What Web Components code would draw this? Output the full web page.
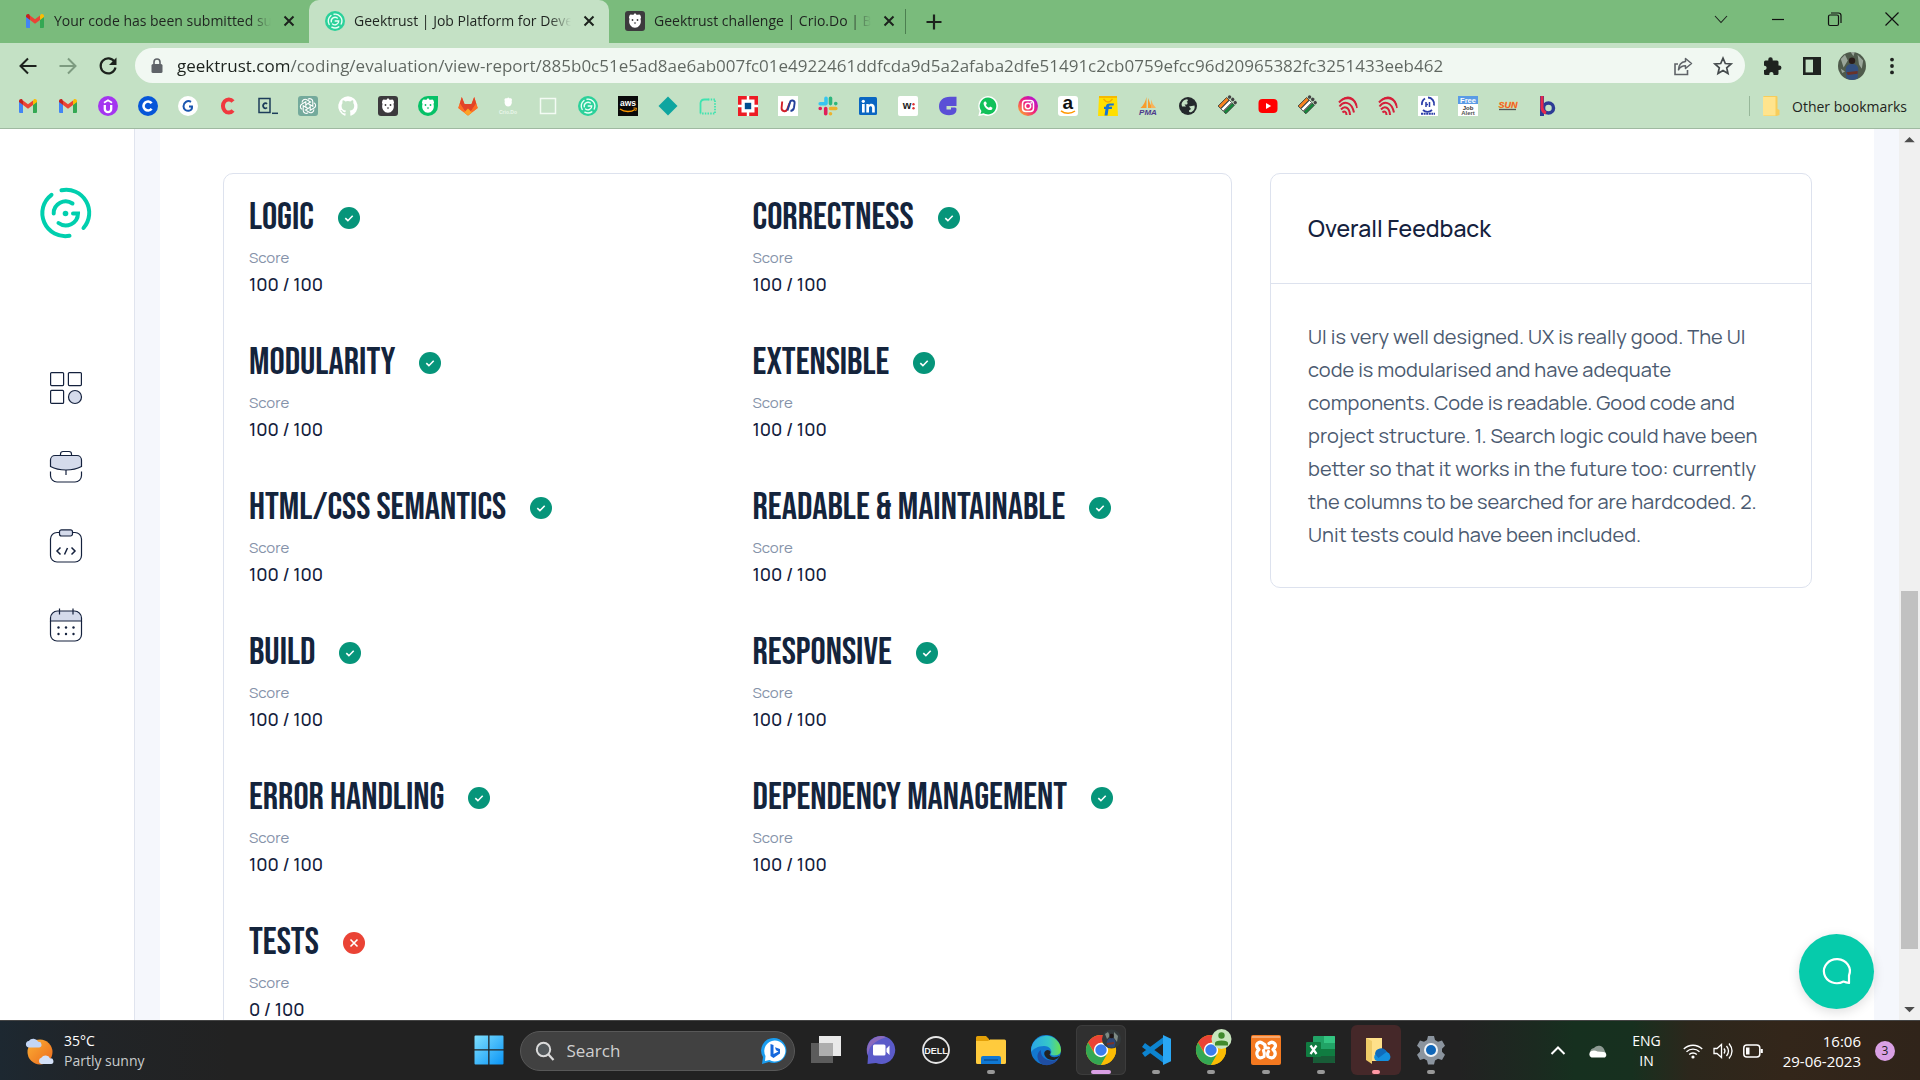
<!DOCTYPE html>
<html lang="en">
<head>
<meta charset="utf-8">
<title>Geektrust | Job Platform for Developers</title>
<style>
html,body{margin:0;height:100%}
body{font-family:"Open Sans","Noto Sans",sans-serif;color:#1f2420;overflow:hidden}
</style>
</head>
<body>
<desktop-screen></desktop-screen>
<script>
const star5 = 'M10 2.2l2.3 5.3 5.8.5-4.4 3.8 1.3 5.7-5-3-5 3 1.3-5.7L1.9 8l5.8-.5z';
const bear = '<path fill="#fff" d="M4.5 4.500Q5.300 2.800 7 3.800L8.500 3.800 10 2 11.500 3.800 13 3.800Q14.700 2.800 15.500 4.500Q16.600 6.500 15.500 8C17 13 13.500 16.800 10 16.800S3 13 4.500 8Q3.400 6.500 4.500 4.500z"/>';
const bearFace = '<circle cx="7.5" cy="9" r=".9"/><circle cx="12.500" cy="9" r=".9"/><path d="M8.800 11.500h2.400L10 13.200z"/>';
const gmail = '<path fill="#4285f4" d="M1 5.500V16a1 1 0 0 0 1 1h3V8.500z"/><path fill="#34a853" d="M15 8.500V17h3a1 1 0 0 0 1-1V5.500z"/><path fill="#fbbc04" d="M15 4.800V9l4-3V5c0-1.800-2-2.600-3.300-1.600z"/><path fill="#c5221f" d="M1 5v1l4 3V4.800L4.300 3.400C3 2.400 1 3.200 1 5z"/><path fill="#ea4335" d="M5 9V4.400l5 3.800 5-3.800V9l-5 3.800z"/>';
const geek = '<circle cx="10" cy="10" r="10" fill="#2bd19a"/><g fill="none" stroke="#eafff6" stroke-width="1.400" stroke-linecap="round"><path d="M4.200 13.500A6.800 6.800 0 0 1 6 4.500M9 3.200a6.900 6.900 0 0 1 7.200 9.800M13.800 15.800a7 7 0 0 1-7 .4M6.300 10.800a3.800 3.800 0 0 1 6-3.800M10.200 10h3.500a3.800 3.800 0 0 1-6.200 3"/></g>';
const crio = (bg, r) => `<rect width="20" height="20" rx="${r}" fill="${bg}"/>${bear}<g fill="${bg}">${bearFace}</g>`;
const voter = '<g transform="rotate(45 10 10)"><rect x="3" y="5" width="3.500" height="12" fill="#f58220" stroke="#333" stroke-width=".8"/><rect x="7" y="5" width="3.200" height="12" fill="#fff" stroke="#333" stroke-width=".8"/><rect x="11" y="5" width="3" height="12" fill="#138a3a" stroke="#333" stroke-width=".8"/><g fill="#444"><circle cx="4.700" cy="2.500" r="1.700"/><circle cx="8.700" cy="2" r="1.700"/><circle cx="12.700" cy="2.500" r="1.700"/></g></g>';
const arcs = '<g fill="none" stroke="#d5203a" stroke-width="2"><path d="M1 6.500C7-.5 16 1.500 18.500 9.500M1.500 10.500c4.500-6 12-5 14.500 6M3 13.500c3.500-4 8.500-2.500 9 5.500M4.500 16.500c2-2 4-.6 4 2.500"/><path d="M3.500 3.800C9-.5 17-.2 19 12" stroke-width="1.600"/></g>';
const chrome = '<circle cx="15" cy="15" r="15" fill="#fbbc04"/><path fill="#ea4335" d="M2 7.500A15 15 0 0 1 28 7.500H15L9 18.500z"/><path fill="#34a853" d="M2 7.500A15 15 0 0 0 15 30l6.500-11.200-6.500 3-6.500-3.300z"/><path fill="#fbbc04" d="M28 7.500H15l6.500 11.300L15 30A15 15 0 0 0 28 7.500z"/><circle cx="15" cy="15" r="7.200" fill="#fff"/><circle cx="15" cy="15" r="5.700" fill="#3b7ded"/>';
const T = (x,y,s,f,t,extra='') => `<text x="${x}" y="${y}" font-size="${s}" fill="${f}" text-anchor="middle" font-family="Liberation Sans,sans-serif" font-weight="700" ${extra}>${t}</text>`;

const ICONS = {
  gmail, geek,
  crio: crio('#3c3a3d',3),
  udemy: '<circle cx="10" cy="10" r="10" fill="#a435f0"/><path d="M6.800 9v4a3.200 3.200 0 0 0 6.400 0V9" fill="none" stroke="#fff" stroke-width="2.300"/><path d="M6 6.800l4-2.500 4 2.500" fill="none" stroke="#fff" stroke-width="1.800"/>',
  coin: '<circle cx="10" cy="10" r="10" fill="#0656d8"/><path d="M13.600 7.300a4.500 4.500 0 1 0 0 5.400" fill="none" stroke="#fff" stroke-width="2.600"/>',
  gwhite: '<circle cx="10" cy="10" r="10" fill="#fff"/><path d="M13 5.800C9.500 3.600 5.500 6.500 5.500 10.200c0 3.200 3 5.300 6 4.400 2-.6 2.700-2.300 2.500-4.200h-3" fill="none" stroke="#1a56b0" stroke-width="2"/>',
  cred: '<path d="M15 5.500a5.800 6.600 0 1 0 0 9" fill="none" stroke="#f0383e" stroke-width="4"/>',
  codec: '<rect x="1" y="2.500" width="11" height="14" fill="none" stroke="#1c3d5a" stroke-width="1.500"/><path d="M9 8a2.200 2.600 0 1 0 0 3.500" fill="none" stroke="#1c3d5a" stroke-width="1.700"/><path d="M14 17.300h6" stroke="#1c3d5a" stroke-width="1.500"/>',
  openai: '<rect width="20" height="20" rx="3" fill="#74aa9c"/><g fill="none" stroke="#fff" stroke-width="1.100">' + [0,60,120,180,240,300].map(a => `<path d="M10 3.300a3 3 0 0 1 4.800 2.500v4.400L10 7.500" transform="rotate(${a} 10 10)"/>`).join('') + '</g>',
  github: '<path fill="#fff" d="M10 .3a10 10 0 0 0-3.200 19.400c.5.100.7-.2.700-.5v-1.900c-2.800.6-3.400-1.200-3.400-1.200-.4-1.100-1.100-1.400-1.100-1.400-.9-.6.100-.6.100-.6 1 .1 1.500 1 1.500 1 .9 1.500 2.400 1.100 2.900.8.100-.6.400-1.100.7-1.300-2.300-.3-4.600-1.100-4.600-4.900 0-1.100.4-2 1-2.700-.1-.2-.4-1.200.1-2.600 0 0 .8-.3 2.700 1a9.400 9.400 0 0 1 5 0c1.900-1.300 2.700-1 2.700-1 .5 1.400.2 2.400.1 2.600.6.700 1 1.600 1 2.700 0 3.800-2.300 4.600-4.600 4.900.4.300.7.900.7 1.900v2.700c0 .3.200.6.700.5A10 10 0 0 0 10 .3z"/>',
  criogreen: '<path d="M10 0h10v10a10 10 0 1 1-10-10z" fill="#06c167"/>'+bear+'<g fill="#06c167">'+bearFace+'</g>',
  gitlab: '<path fill="#fc6d26" d="M10 19.500L.3 12 3.800 1l2.700 7h7l2.700-7 3.500 11z"/><path fill="#e24329" d="M3.800 1l2.700 7h7l2.700-7 2 6.500L10 19.500 1.800 7.500z" /><path fill="#fc6d26" d="M1.800 7.500L10 19.500.3 12zM18.200 7.500L10 19.500l9.700-7.500z"/><path fill="#fca326" d="M6 16.400l4 3.100 4-3.100-4-4z"/>',
  criodo: '<g transform="translate(4 0) scale(.62)">'+bear+'</g>'+T(10,18,5,'#e9f6ea','Crio.Do'),
  box: '<rect x="2.500" y="2.500" width="15" height="15" fill="none" stroke="#f3fbf4" stroke-width="1.500"/>',
  aws: '<rect width="20" height="20" fill="#0a0a0a"/>'+T(10,10,8.5,'#fff','aws')+'<path d="M2 13c4.500 3.300 11 3.300 15 .5" fill="none" stroke="#f90" stroke-width="1.500"/><path d="M15.500 12l3 .2-.8 2.800" fill="none" stroke="#f90"/>',
  diamond: '<path fill="#0ea5a0" d="M10 .5L19.500 10 10 19.500.5 10z"/>',
  dashed: '<path d="M2.500 17.500V7a4 4 0 0 1 4-3.500h4" fill="none" stroke="#3fe3b0" stroke-width="1.800"/><path d="M10 3.500h7v14H2.500" fill="none" stroke="#3fe3b0" stroke-width="1.800" stroke-dasharray="1.500 1.200"/>',
  hdfc: '<rect width="20" height="20" fill="#ed1c24"/><path fill="#fff" d="M3.500 3.500h13v13h-13z"/><path fill="#fff" d="M8.800 0h2.400v20H8.800zM0 8.800h20v2.400H0z"/><rect x="6.800" y="6.800" width="6.400" height="6.400" fill="#004c8f"/>',
  ubi: '<rect width="20" height="20" fill="#fff"/><g fill="none" stroke-width="1.900"><path d="M4.200 5.500L3.600 12a2.900 2.900 0 0 0 5.500 1.500L11.500 7" stroke="#d2202a"/><path d="M9.500 14.500L12 6.500a2.300 2.300 0 0 1 4.600.6L16 11.500q-.5 3-3.500 3.500" stroke="#22409a"/></g>',
  slack: '<g stroke-width="3.600" stroke-linecap="round"><path d="M8 2.200v5.300M2.200 7.700h5.400" stroke="#36c5f0"/><path d="M12.500 2.200v5.400M17.800 7.600h-.1" stroke="#2eb67d"/><path d="M12.500 12.500h5.300M12.500 17.800v-.1" stroke="#ecb22e"/><path d="M7.700 12.500v5.300M2.200 12.500h.1" stroke="#e01e5a"/></g>',
  linkedin: '<rect x="1" y="1" width="18" height="18" rx="1.500" fill="#0a66c2"/><g fill="#fff"><circle cx="5.300" cy="5.300" r="1.600"/><path d="M4 8h2.700v8.500H4zM8.300 8h2.500v1.200c1.400-2.300 6-1.900 6 2.400v4.900h-2.700v-4.400c0-2.600-3.100-2.500-3.100 0v4.400H8.300z"/></g>',
  w: '<rect width="20" height="20" rx="2" fill="#fff"/>'+T(9,13,11,'#222','w')+'<g fill="#d33"><circle cx="15.500" cy="8.200" r="1.200"/><circle cx="15.500" cy="12.300" r="1.200"/></g>',
  purple: '<path fill="#5a4fd6" d="M18.500.8V10H8.500v3.500H13v-2h4q1.500 0 1.500 1.500c0 4-2 6.200-7.500 6.200C4.500 19.200 1 15.500 1 10.500 1 5 5 .8 12 .8z"/>',
  whatsapp: '<path fill="#fff" d="M10 0a10 10 0 0 1 0 20 10 10 0 0 1-4.500-1L.3 20l1.300-5A10 10 0 0 1 10 0z"/><path fill="#12c15a" d="M10 1.600a8.400 8.400 0 1 1-4.400 15.600l-3.100.8.900-3A8.400 8.400 0 0 1 10 1.600z"/><path fill="#fff" d="M6.900 5.500c.8-.3 1.200 0 1.500 1l.4 1.200-.9 1.300c.7 1.300 1.800 2.200 3.100 2.800l1.100-1.200 2.300 1.100c.2 1.300-.9 2.300-2.200 2.400C8.800 14 5.600 10 5.600 7.500c0-1 .6-1.700 1.300-2z"/>',
  insta: '<defs><linearGradient id="i" x1="1" y1="0" x2="0" y2="1"><stop stop-color="#a010f0"/><stop offset=".5" stop-color="#f0207a"/><stop offset="1" stop-color="#ffc81a"/></linearGradient></defs><circle cx="10" cy="10" r="10" fill="url(#i)"/><g fill="none" stroke="#fff" stroke-width="1.500"><rect x="4.500" y="4.500" width="11" height="11" rx="3.200"/><circle cx="10" cy="10" r="2.700"/></g><circle cx="13.200" cy="6.800" r=".9" fill="#fff"/>',
  amazon: '<rect width="20" height="20" rx="3" fill="#fff"/>'+T(9.8,13,19,'#111','a')+'<path d="M3 14.800c4 3.300 10 3.300 14 .2" fill="none" stroke="#f90" stroke-width="1.500"/>',
  flipkart: '<path fill="#ffdf00" d="M1 1h18l1 19H0z"/><path fill="#f7b900" d="M1 0h18v2H1z"/><path d="M5.500 3q4.500 6 9 0" fill="none" stroke="#f5a800" stroke-width="1.300"/><path fill="#1673d6" d="M16 7.500h-3.500c-3.300-.2-4.300 1-4.700 3.200H6v2.200h1.500l-1 6.600h3l1-6.600h3.300l.4-2.200h-3.300c.2-1 .8-1.200 2-1.100h2.700z"/>',
  pma: '<path fill="#f89c2c" d="M8.500 1v11H2.500Q7 8 8.500 1zM10 2v10h4.500Q12 8 10 2z"/><path fill="#f7b45c" d="M13 3.500V12h5Q14 8 13 3.500z"/>'+T(10,19,8,'#4b3a8c','PMA','font-style="italic"'),
  globe: '<circle cx="10" cy="10" r="9" fill="#24292c"/><path fill="#c4e1c5" d="M3.500 8Q4.500 4 9 3.200q2 1-.5 2.800 2 .5.500 2.500H6.500l1.500 2H4zM11 10.500l5.500-1q1 4-3 6.500-3 1-2.500-1.500l2-1.500z"/>',
  voter, youtube: '<rect x="0.500" y="3" width="19" height="14" rx="4" fill="#f00"/><path fill="#fff" d="M8 7l5.200 3L8 13z"/>',
  arcs,
  irctc: '<rect width="20" height="20" fill="#fff"/><path d="M10 1.500a6.500 6.500 0 0 1 6 8M14 14a6.500 6.500 0 0 1-9 0M4 9a6.500 6.500 0 0 1 3-6.500" fill="none" stroke="#2b3ea8" stroke-width="1.800"/><path d="M8 6v5M11.500 6v5M8 8.500h2" stroke="#2b3ea8" stroke-width="1.500"/><path d="M3 17.800h14" stroke="#2b3ea8" stroke-width="2" stroke-dasharray="2 .6"/>',
  job: '<rect width="20" height="20" fill="#fff"/><rect width="20" height="8" fill="#5a9be6"/>'+T(10,6.8,7.5,'#fff','Free')+T(10,13.5,6,'#333','Job')+T(10,18.5,6,'#555','Alert'),
  sun: T(10,11.500,9,'#f23a1d','SUN','font-style="italic" stroke="#f8a61c" stroke-width=".3"')+'<path d="M1 13.500h17" stroke="#555" stroke-width="1.300"/>',
  bblue: '<path d="M4 0v20" stroke="#2d3b96" stroke-width="4"/><circle cx="10.500" cy="12" r="5" fill="none" stroke="#2d3b96" stroke-width="3.500"/><path d="M4 0v12a6 6 0 0 0 4 5" fill="none" stroke="#e5284c" stroke-width="3"/>',
  folder: '<path fill="#f7cd5b" d="M2.500 0h13a1 1 0 0 1 1 1v12l2 1v5l-3 1h-13z"/><path fill="#ffe48d" d="M2 1h12.500v18.500H2z"/>',
  close: '<path d="M5.500 5.500l9 9M14.500 5.500l-9 9" stroke="#1c221d" stroke-width="2"/>',
  plus: '<path d="M10 2.500v15M2.500 10h15" stroke="#1c221d" stroke-width="2.200"/>',
  chev: '<path d="M4 7l6 6.500 6-6.500" fill="none" stroke="#1c221d" stroke-width="1.100"/>',
  min: '<path d="M4 10.500h12" stroke="#111" stroke-width="1.200"/>',
  max: '<rect x="3.500" y="6" width="10" height="10.500" rx="1.500" fill="none" stroke="#111" stroke-width="1.200"/><path d="M6 4h7.500a2.500 2.500 0 0 1 2.500 2.500V14" fill="none" stroke="#111" stroke-width="1.200"/>',
  winx: '<path d="M3.500 3.500l13 13M16.500 3.500l-13 13" stroke="#111" stroke-width="1.200"/>',
  back: '<path d="M18.500 10H3M10 2.500L2.500 10l7.500 7.500" fill="none" stroke="#1c221d" stroke-width="2"/>',
  fwd: '<path d="M1.500 10H17M10 2.500l7.500 7.500-7.500 7.500" fill="none" stroke="#7d9b80" stroke-width="2"/>',
  reload: '<path d="M16.600 6A7.500 7.500 0 1 0 17.500 11.500" fill="none" stroke="#1c221d" stroke-width="2.200"/><path fill="#1c221d" d="M18.500 1.500v7.500h-7.500z"/>',
  lock: '<rect x="4.500" y="8" width="11" height="9" rx="1.500" fill="#5f6368"/><path d="M7 8V6a3 3 0 0 1 6 0v2" fill="none" stroke="#5f6368" stroke-width="1.600"/>',
  share: '<path d="M5 8H2v10.500h12.500V14" fill="none" stroke="#5f6368" stroke-width="1.600"/><path d="M12.500 2.500l6 5-6 5V9.800c-3.500 0-5.500 1.200-7 4 .2-4.500 2.500-7.800 7-8.300z" fill="none" stroke="#5f6368" stroke-width="1.500" stroke-linejoin="round"/>',
  star: `<path d="${star5}" fill="none" stroke="#454b4d" stroke-width="1.700"/>`,
  puzzle: '<path fill="#1f2320" d="M8.500 1.200a2.200 2.200 0 0 1 2.200 2.300V4.500H15a1.500 1.500 0 0 1 1.500 1.500v3.500h.7a2.200 2.200 0 0 1 0 4.500h-.7v3.500A1.500 1.500 0 0 1 15 19h-3.500v-.9a2.100 2.100 0 0 0-4.200 0V19H3.500A1.500 1.500 0 0 1 2 17.500V14h.9a2.200 2.200 0 0 0 0-4.300H2V6a1.500 1.500 0 0 1 1.500-1.500h2.800v-1a2.200 2.200 0 0 1 2.200-2.300z"/>',
  panel: '<rect x="2.300" y="2.300" width="15.400" height="15.400" fill="none" stroke="#1f2320" stroke-width="2.600"/><path fill="#1f2320" d="M11 2h7v16h-7z"/>',
  avatar: '<circle cx="10" cy="10" r="10" fill="#4f5b4c"/><path fill="#9aa69a" d="M2 5l3-3 2 4-3 5zM14 2l4 4-1 6-2-3zM9 0h3l-1 3zM2 12l3 2-2 1z"/><circle cx="10" cy="6.200" r="2.300" fill="#2a1d1a"/><path fill="#33507f" d="M5.500 12Q6 8.500 10 8.500t4.500 3.500l-.5 7q-4 2-8-.2z"/><path fill="#6b3328" d="M6 14.500l8-1v2l-7 1z"/>',
  dots: '<g fill="#1f2320"><circle cx="10" cy="3.600" r="1.900"/><circle cx="10" cy="10" r="1.900"/><circle cx="10" cy="16.400" r="1.900"/></g>',
  up: '<path fill="#4d4d4d" d="M10 7.500l5 5H5z"/>', down: '<path fill="#4d4d4d" d="M10 12.500l5-5H5z"/>',
  ok: '<circle cx="11" cy="11" r="11" fill="#06957a"/><path d="M7.300 11.200l2.600 2.500 4.800-4.900" fill="none" stroke="#fff" stroke-width="1.600"/>',
  bad: '<circle cx="11" cy="11" r="11" fill="#ea4335"/><path d="M7.500 7.500l7 7M14.500 7.500l-7 7" stroke="#fff" stroke-width="1.600"/>',
  logo: '<g fill="none" stroke="#00cfae" stroke-width="4" stroke-linecap="round"><path d="M21.500 2.300A23 23 0 0 1 43.500 40M11.500 6.800a23 23 0 0 0 18 41"/><path d="M13.700 25.500A12 12 0 0 1 32.500 15.500M18.500 35A12.200 12.200 0 0 0 38 25.500h-5"/></g><circle cx="25.500" cy="25.500" r="2.800" fill="#00cfae"/>',
  nav1: '<g fill="#fff" stroke="#14213d" stroke-width="1.200"><rect x="1.600" y="1.600" width="13" height="13" rx="1"/><rect x="19.400" y="1.600" width="13" height="13" rx="1"/><rect x="1.600" y="19.400" width="13" height="13" rx="1"/><circle cx="26" cy="26" r="6.500" fill="#d5dbeb"/></g>',
  nav2: '<g fill="none" stroke="#14213d" stroke-width="1.200"><path d="M11.500 5.500V4a2.500 2.500 0 0 1 2.500-2.500h6A2.500 2.500 0 0 1 22.500 4v1.500"/><path fill="#d5dbeb" d="M1.500 10a4.500 4.500 0 0 1 4.500-4.500h22a4.500 4.500 0 0 1 4.500 4.500v6.500Q26 20 17 20T1.500 16.500z"/><path d="M1.500 21.500v4a6.500 6.500 0 0 0 6.500 6.500h18a6.500 6.500 0 0 0 6.500-6.500v-4M17 20v5"/></g>',
  nav3: '<g fill="none" stroke="#14213d" stroke-width="1.200"><path d="M11 3.500H8A6.500 6.500 0 0 0 1.500 10v16.500A6.500 6.500 0 0 0 8 33h18a6.500 6.500 0 0 0 6.500-6.500V10A6.500 6.500 0 0 0 26 3.500h-3"/><rect x="10.500" y=".8" width="13" height="6.200" rx="2" fill="#d5dbeb"/><path stroke-width="1.500" d="M11.500 18.500L8 22l3.500 3.500M22.500 18.500L26 22l-3.500 3.500M18.500 19l-3 6.500"/></g>',
  nav4: '<g fill="none" stroke="#14213d" stroke-width="1.200"><path fill="#d5dbeb" d="M1.500 13V10A7 7 0 0 1 8.500 3h17a7 7 0 0 1 7 7v3z"/><path d="M1.500 13v13.500A6.500 6.500 0 0 0 8 33h18a6.500 6.500 0 0 0 6.500-6.500V13M10.500.5v6M24 .5v6"/></g><g fill="#14213d"><circle cx="9.500" cy="19.500" r="1.200"/><circle cx="17" cy="19.500" r="1.200"/><circle cx="24.500" cy="19.500" r="1.200"/><circle cx="9.500" cy="26" r="1.200"/><circle cx="17" cy="26" r="1.200"/><circle cx="24.500" cy="26" r="1.200"/></g>',
  chat: '<path d="M27 25v-5.500A13 12 0 1 0 21.500 25.500Q24 26.500 27 27z" transform="translate(0 -1)" fill="none" stroke="#fff" stroke-width="2.200" stroke-linejoin="round"/>',
  weather: '<defs><linearGradient id="s" x1="0" x2="1" y2="1"><stop stop-color="#fbb034"/><stop offset="1" stop-color="#ec6a1e"/></linearGradient></defs><circle cx="15" cy="16" r="12.500" fill="url(#s)"/><path fill="#c3d6f5" d="M3.500 11.500a3.300 3.300 0 0 1 .3-6.500 5.500 5.500 0 0 1 9.500.8 2.900 2.900 0 0 1 1 5.700z"/><path fill="#d3e0f7" d="M16 28a3.300 3.300 0 0 1 .3-6.200 5 5 0 0 1 8.800.6 2.800 2.800 0 0 1 1 5.600z"/>',
  win: '<defs><linearGradient id="w" x1="0" x2="1" y2="1"><stop stop-color="#7fe0ff"/><stop offset="1" stop-color="#0a94f5"/></linearGradient></defs><path fill="url(#w)" d="M.5 1.500a1 1 0 0 1 1-1h12.700v13.700H.5zM15.500.5h13a1 1 0 0 1 1 1v12.700h-14zM.5 15.500h13.700v14H1.500a1 1 0 0 1-1-1zM15.500 15.500h14v13a1 1 0 0 1-1 1h-13z"/>',
  search: '<circle cx="8.500" cy="8.500" r="6.700" fill="#53585b" stroke="#dadada" stroke-width="2"/><path d="M13.500 13.500l5 5.500" stroke="#dadada" stroke-width="2.200"/>',
  bing: '<path fill="#1a9df0" d="M13 0a12.500 12.500 0 1 1-5 24L1 26l1-7A12.500 12.500 0 0 1 13 0z"/><path fill="#fff" d="M13.500 2.500a10.500 10.500 0 1 1-5 19.500l-4.500 1 .5-5a10.500 10.500 0 0 1 9-15.500z"/><path fill="#1668dc" d="M9.500 6l3 1v9l5-2.500-2.500-1.200-1-3L19 11v4.500L12.500 20l-3-2z"/>',
  task: '<path fill="#e9e9e9" d="M8 1h22v20H8z"/><path fill="#666" d="M0 8h22v20H0z" opacity=".85"/><path fill="#aeaeae" d="M8 8h14v13H8z"/>',
  teams: '<path fill="#5b5bc9" d="M15 1a14 14 0 1 1-5 27L1.500 29 2 21A14 14 0 0 1 15 1z"/><path fill="#8b6bbd" d="M15 1A14 14 0 0 0 2 20Q2 8 20 2.200 17.500 1 15 1z"/><path fill="#fff" d="M8.500 9.500h9.500a1.500 1.500 0 0 1 1.500 1.500v8a1.500 1.500 0 0 1-1.500 1.500H8.500A1.500 1.500 0 0 1 7 19v-8a1.500 1.500 0 0 1 1.500-1.500zM20.500 13.500l3-3v9.500l-3-3z"/>',
  dell: '<circle cx="15" cy="15" r="13" fill="#222" stroke="#e6e6e6" stroke-width="1.800"/>'+T(15,18.500,9,'#f2f2f2','DELL'),
  files: '<path fill="#e3a008" d="M0 2.500A1.500 1.500 0 0 1 1.500 1H10l3 3v4H0z"/><path fill="#ffcb3d" d="M0 6h12l2-1.500h14.500A1.500 1.500 0 0 1 30 6v21.500a1.500 1.500 0 0 1-1.500 1.500h-27A1.500 1.500 0 0 1 0 27.500z"/><path fill="#0f78d4" d="M5 29v-6a2 2 0 0 1 2-2h16a2 2 0 0 1 2 2v6z"/><path stroke="#0b4f94" stroke-width="1.500" d="M8 25h14"/>',
  edge: '<defs><linearGradient id="e"><stop stop-color="#2aa5e8"/><stop offset=".6" stop-color="#35c8c8"/><stop offset="1" stop-color="#6be04e"/></linearGradient></defs><circle cx="15" cy="15" r="15" fill="#1278d0"/><path fill="url(#e)" d="M.5 12A15 15 0 0 1 30 15c0 5.500-7 6.500-10.500 4.500 2.500-3.500-.5-8.500-6.500-8.500C7 11 2 14 .2 17Q-.2 14 .5 12z"/><path fill="#1f4ea3" d="M10 15c-1 8 7 12.500 17 9.500A15 15 0 0 1 12 29.700C5 26 5 18 10 15z"/><path fill="#222" d="M18.500 19.500q1 2.500 5 2.800 3 0 5.500-1.800-1.500 3.500-5 4.300C17 26 12 21 13.500 17q2-3 5-1.500 2 1.500 0 4z"/>',
  chrome1: chrome+'<circle cx="25.500" cy="4" r="9.500" fill="#333a3c"/><path fill="#7d8a84" d="M19-1l3-2 2 4-3 3zM28-3l4 4-1 6-3-4z"/><path fill="#2d4675" d="M20.500 8q1-5 5-5t4 5l-1 4.500h-6z"/><circle cx="25.500" cy="1" r="2.200" fill="#1f1514"/><path fill="#7b3327" d="M21 8l7-1v2l-7 1z"/>',
  chrome2: chrome+'<circle cx="25.500" cy="4" r="10" fill="#c7e5bd"/><circle cx="25.500" cy="0.500" r="3.200" fill="#3f8a2c"/><path fill="#3f8a2c" d="M19 10.500V8q0-2.500 6.500-2.500T32 8v2.500z"/>',
  code: '<path d="M24 4L2.500 20M24 26L2.500 10" stroke="#0d84d0" stroke-width="5"/><path fill="#2aa7f4" d="M22 0l8 3.800v22.400L22 30z"/>',
  xampp: '<rect width="30" height="30" rx="2" fill="#f47920"/><path d="M1 2h28" stroke="#f9b98a" stroke-width="1.500"/><g fill="none" stroke="#fff" stroke-width="3.200" stroke-linejoin="round" stroke-linecap="round"><path d="M12 8.500Q9 6 6.500 8.500T8 14.500Q4.500 17.500 6.500 21T13 21.500Q14 18.500 12.500 15.500M12 8.500q3 1 2 4.500h3.500"/><path d="M18 8.500Q21 6 23.500 8.500T22 14.500Q25.500 17.500 23.500 21T17 21.500Q16 18.500 17.500 16.500"/></g>',
  excel: '<rect x="7" y="1" width="22" height="27" rx="1" fill="#21a366"/><path fill="#33c481" d="M18 1h10a1 1 0 0 1 1 1v6H18z"/><path fill="#107c41" d="M7 14h22v7H7z"/><path fill="#185c37" d="M7 21h22v6a1 1 0 0 1-1 1H8a1 1 0 0 1-1-1z"/><rect y="7" width="15" height="15" rx="1" fill="#107c41"/><path d="M4.500 10.500l6 8.500M10.500 10.500l-6 8.500" stroke="#fff" stroke-width="2.200"/>',
  onedrive: '<path fill="#ffe08a" d="M5 3h16v23H8z"/><path fill="#f0cb68" d="M5 3l6 3v23l-6-4z"/><path fill="#1490df" d="M16 26a4 4 0 0 1-.5-7.500 6 6 0 0 1 10.500-1.500 5 5 0 0 1 1 9z"/><path fill="#0f6cbd" d="M14 19a6 6 0 0 1 11.500-2l-8 6z"/>',
  gear: '<path fill="#8b949e" d="M12 1h6l1 4 3 1.700 4-1.200 3 5.200-3 3v3l3 3-3 5.200-4-1.200-3 1.700-1 4h-6l-1-4-3-1.700-4 1.200-3-5.200 3-3v-3l-3-3L4 5.500l4 1.200L11 5z"/><circle cx="15" cy="15" r="7" fill="#f0f3f6"/><circle cx="15" cy="15" r="5" fill="#0f66b8"/>',
  tup: '<path d="M3.500 13l6.500-6.500 6.500 6.500" fill="none" stroke="#fff" stroke-width="2"/>',
  cloud: '<path fill="#8e9a93" d="M2 11a5 5 0 0 1 4-4 6 6 0 0 1 10 1l2 5H4z"/><path fill="#fff" d="M3.500 16.500a3.500 3.500 0 0 1 0-6.500q3-1 6 .5l6 .5a3 3 0 0 1 1.500 5.500z"/>',
  wifi: '<g fill="none" stroke="#fff" stroke-width="1.400"><path d="M.8 8a13 13 0 0 1 18.400 0M3.500 10.800a9.200 9.200 0 0 1 13 0M6.200 13.500a5.400 5.400 0 0 1 7.600 0"/></g><circle cx="10" cy="16" r="1.600" fill="#fff"/>',
  vol: '<g fill="none" stroke="#fff" stroke-width="1.300"><path d="M1 7.500h3L8.500 3.500v13L4 12.500H1zM11 7.500q2 2.500 0 5M13.500 5q4 5 0 10M16 2.500q6 7.500 0 15"/></g>',
  batt: '<rect x=".8" y="4" width="16" height="12" rx="3" fill="none" stroke="#fff" stroke-width="1.500"/><rect x="3" y="6.500" width="3.500" height="7" fill="#fff"/><path d="M18.700 8v4" stroke="#fff" stroke-width="2.200"/>'
};

function define(name, render) {
  customElements.define(name, class extends HTMLElement {
    connectedCallback() {
      if (this.shadowRoot) return;
      const t = document.createElement('template');
      t.innerHTML = render(this);
      this.attachShadow({mode: 'open'}).append(t.content.cloneNode(true));
    }
  });
}
const BTN = 'button,a{all:unset;box-sizing:border-box;display:flex;align-items:center;justify-content:center;cursor:pointer}';
const icon = (n, s = 20, b = s) => `<ui-icon name="${n}" size="${s}" box="${b}"></ui-icon>`;

define('ui-icon', el => {
  const s = el.getAttribute('size') || 20, b = el.getAttribute('box') || s;
  return `<style>:host{display:block;flex:none;line-height:0}svg{overflow:visible}</style>
  <svg width="${s}" height="${s}" viewBox="0 0 ${b} ${b}" aria-hidden="true">${ICONS[el.getAttribute('name')]}</svg>`;
});

define('browser-tab', el => `<style>
  :host{display:flex;align-items:center;box-sizing:border-box;width:300px;height:43px;padding:0 10px 2px 16px;gap:8px;font-size:14px}
  :host([active]){background:#c4e1c5;border-radius:10px 10px 0 0}
  ${BTN}
  a{flex:1;min-width:0;justify-content:flex-start;gap:9px}
  span{flex:1;min-width:0;overflow:hidden;white-space:nowrap;line-height:24px;-webkit-mask-image:linear-gradient(90deg,#000 90%,transparent)}
  </style><a href="#">${icon(el.getAttribute('icon'))}<span><slot></slot></span></a><button aria-label="Close tab">${icon('close',20)}</button>`);

define('tab-strip', () => `<style>
  :host{display:flex;height:43px;background:#7abb7c;padding-left:9px}
  ${BTN}
  .new{gap:18px;margin-left:-4px}.new i{width:1px;height:25px;background:#4c7f50}
  .new,.win{display:flex;align-items:center}
  .win{margin-left:auto;height:37px}.win button{width:57px;height:37px}
  </style>
  <browser-tab icon="gmail">Your code has been submitted successfully</browser-tab>
  <browser-tab icon="geek" active>Geektrust | Job Platform for Developers</browser-tab>
  <browser-tab icon="crio">Geektrust challenge | Crio.Do | Build projects</browser-tab>
  <div class="new"><i></i><button aria-label="New tab">${icon('plus')}</button></div>
  <div class="win">${['chev','min','max','winx'].map(n=>`<button aria-label="${n}">${icon(n,20)}</button>`).join('')}</div>`);

define('tool-bar', () => `<style>
  :host{display:flex;align-items:center;gap:20px;height:45px;background:#c4e1c5;padding:0 18px}
  ${BTN}
  form{flex:1;display:flex;align-items:center;box-sizing:border-box;height:35px;margin:0 -3px;padding:0 12px;gap:20px;border-radius:18px;background:#f1f8f2}
  input{all:unset;flex:1;min-width:0;margin-left:-10px;font-size:17px;line-height:26px;color:transparent;background:linear-gradient(90deg,#1c221d 112px,#5f6660 112px);background-clip:text;-webkit-background-clip:text}
  .me{margin:0 -4px}
  </style>
  <button aria-label="Back">${icon('back')}</button><button aria-label="Forward">${icon('fwd')}</button><button aria-label="Reload">${icon('reload')}</button>
  <form>${icon('lock',20)}<input type="text" aria-label="Address" value="geektrust.com/coding/evaluation/view-report/885b0c51e5ad8ae6ab007fc01e4922461ddfcda9d5a2afaba2dfe51491c2cb0759efcc96d20965382fc3251433eeb462"><button type="button" aria-label="Share">${icon('share')}</button><button type="button" aria-label="Bookmark">${icon('star')}</button></form>
  <button aria-label="Extensions">${icon('puzzle')}</button><button aria-label="Side panel">${icon('panel')}</button><button class="me" aria-label="Profile">${icon('avatar',28,20)}</button><button aria-label="Menu">${icon('dots')}</button>`);

const MARKS = 'gmail gmail udemy coin gwhite cred codec openai github crio criogreen gitlab criodo box geek aws diamond dashed hdfc ubi slack linkedin w purple whatsapp insta amazon flipkart pma globe voter youtube voter arcs arcs irctc job sun bblue'.split(' ');
define('bookmark-bar', () => `<style>
  :host{display:flex;align-items:center;height:41px;box-sizing:border-box;background:#c4e1c5;border-bottom:1px solid #9fb9a1;padding:0 13px 4px 18px;font-size:14px}
  ${BTN}
  nav{display:flex;gap:20px}
  .o{margin-left:auto;gap:11px;border-left:1px solid #97b79a;padding-left:11px;height:20px;white-space:nowrap}
  </style><nav>${MARKS.map(n=>`<a href="#" aria-label="${n}">${icon(n)}</a>`).join('')}</nav><button class="o">${icon('folder')}Other bookmarks</button>`);

define('side-nav', () => `<style>
  :host{display:flex;flex-direction:column;align-items:center;box-sizing:border-box;width:135px;flex:none;padding:59px 3px 0 0;background:#fff;border-right:1px solid #e0e4ee}
  ${BTN}
  nav{display:flex;flex-direction:column;gap:45px;margin-top:132px}
  </style><a href="#" aria-label="Geektrust">${icon('logo',51)}</a>
  <nav>${['nav1','nav2','nav3','nav4'].map((n,i)=>`<a href="#" aria-label="${['Dashboard','Jobs','Challenges','Events'][i]}">${icon(n,34)}</a>`).join('')}</nav>`);

define('score-item', el => `<style>
  :host{display:block;padding:0 25px;font-family:Manrope,Inter,sans-serif;color:#14213d}
  header{display:flex;align-items:center;gap:24px;height:48px}
  h2{margin:0;font:400 38px/48px "Bebas Neue",sans-serif;color:#14243c;white-space:nowrap}
  dl{margin:4px 0 0}
  dt{font-size:15px;line-height:24px;color:#8592a9}
  dd{margin:0;font-size:18px;line-height:28px;font-weight:500}
  </style><header><h2><slot></slot></h2>${icon(el.hasAttribute('failed')?'bad':'ok',22)}</header><dl><dt>Score</dt><dd>${el.getAttribute('score')} / 100</dd></dl>`);

define('score-card', () => `<style>
  :host{display:grid;grid-template-columns:1fr 1fr;row-gap:41px;align-content:start;box-sizing:border-box;padding:20px 0 40px;border:1px solid #dde2ee;border-radius:10px;background:#fff}
  </style><slot></slot>`);

define('feedback-card', () => `<style>
  :host{display:block;align-self:start;border:1px solid #dde2ee;border-radius:10px;background:#fff;font-family:Manrope,Inter,sans-serif}
  h3{margin:0;padding:37px;font-weight:500;font-size:23px;line-height:35px;color:#14213d;border-bottom:1px solid #dde2ee}
  p{margin:0;padding:36px 37px;font-size:20px;line-height:33px;color:#4b5a70}
  </style><h3><slot name="title"></slot></h3><p><slot></slot></p>`);

define('chat-button', () => `<style>
  :host{position:absolute;right:46px;bottom:11px}
  ${BTN}
  button{width:75px;height:75px;border-radius:50%;background:#06cbab;box-shadow:0 3px 12px #0002}
  </style><button aria-label="Chat">${icon('chat',30)}</button>`);

define('scroll-track', () => `<style>
  :host{display:flex;flex-direction:column;align-items:center;width:21px;flex:none;background:#f0f0f0}
  i{width:17px;background:#c1c1c1;flex:358}b{flex:441}s{flex:50}
  </style>${icon('up',21,20)}<b></b><i></i><s></s>${icon('down',21,20)}`);

define('report-page', () => `<style>
  :host{display:flex;flex:1;min-height:0;position:relative;background:#f5f7fc}
  main{flex:1;min-width:0;margin:0 25px;padding:44px 62px 0 63px;background:#fff;display:grid;grid-template-columns:1.862fr 1fr;gap:38px;align-items:start;overflow:hidden}
  </style><side-nav></side-nav>
  <main><score-card>
    <score-item score="100">LOGIC</score-item><score-item score="100">CORRECTNESS</score-item>
    <score-item score="100">MODULARITY</score-item><score-item score="100">EXTENSIBLE</score-item>
    <score-item score="100">HTML/CSS SEMANTICS</score-item><score-item score="100">READABLE &amp; MAINTAINABLE</score-item>
    <score-item score="100">BUILD</score-item><score-item score="100">RESPONSIVE</score-item>
    <score-item score="100">ERROR HANDLING</score-item><score-item score="100">DEPENDENCY MANAGEMENT</score-item>
    <score-item score="0" failed>TESTS</score-item>
  </score-card>
  <feedback-card><span slot="title">Overall Feedback</span>UI is very well designed. UX is really good. The UI code is modularised and have adequate components. Code is readable. Good code and project structure. 1. Search logic could have been better so that it works in the future too: currently the columns to be searched for are hardcoded. 2. Unit tests could have been included.</feedback-card></main>
  <scroll-track></scroll-track><chat-button></chat-button>`);

define('task-app', el => `<style>
  :host{display:block;width:55px;height:60px}
  ${BTN}
  button{position:relative;width:50px;height:50px;margin:4px 2px;border-radius:6px}
  :host([active]) button{background:#303030;box-shadow:inset 0 0 0 1px #3c3c3c}
  :host([alert]) button{background:#452829}
  i{position:absolute;bottom:1px;left:21px;width:8px;height:4px;border-radius:2px;background:#989898}
  :host([active]) i{left:15px;width:20px;background:#d9a0e4}
  :host([alert]) i{background:#ff98a4}
  </style><button aria-label="${el.getAttribute('icon')}">${icon(el.getAttribute('icon'),30)}${el.hasAttribute('running')?'<i></i>':''}</button>`);

define('task-bar', () => `<style>
  :host{display:grid;grid-template-columns:1fr auto 1fr;box-sizing:border-box;height:60px;flex:none;color:#fff;font-size:14px;line-height:20px;border-top:1px solid #444;
   background:linear-gradient(90deg,#1d2831 0,#212427 5%,#222 12%,#222 76%,#1b2a20 80%,#16301f 82%,#17301f 85%,#2c271c 88%,#33261a 93%,#30241a 100%)}
  ${BTN}
  div{display:flex;align-items:center}
  .w{padding-left:25px}.w button{gap:9px}.w span{display:block}.w em{font-style:normal;color:#c9cccd}
  label{display:flex;align-items:center;box-sizing:border-box;width:275px;height:40px;margin:0 4px 0 3px;padding:0 7px 0 14px;gap:12px;border-radius:20px;background:#414141;border:1px solid #585858}
  input{all:unset;flex:1;min-width:0;font-size:17px;line-height:24px;color:#d0d0d0}
  input::placeholder{color:#d0d0d0}
  .t{justify-content:flex-end;padding-right:25px;text-align:center}
  .t span{display:block}
  .lang{margin:0 22px 0 24px}.clock{text-align:right;font-size:15px;margin:0 14px 0 20px}
  .n{width:20px;height:20px;border-radius:50%;background:#d9a0e4;color:#222;font-size:12px}
  .up{margin-right:20px}.sys{gap:10px}
  </style>
  <div class="w"><button>${icon('weather',30)}<span>35°C<br><em>Partly sunny</em></span></button></div>
  <div><task-app icon="win"></task-app><label>${icon('search')}<input type="search" aria-label="Search" placeholder="Search">${icon('bing',26)}</label>
  <task-app icon="task"></task-app><task-app icon="teams"></task-app><task-app icon="dell"></task-app><task-app icon="files" running></task-app><task-app icon="edge"></task-app><task-app icon="chrome1" running active></task-app><task-app icon="code" running></task-app><task-app icon="chrome2" running></task-app><task-app icon="xampp" running></task-app><task-app icon="excel" running></task-app><task-app icon="onedrive" running alert></task-app><task-app icon="gear" running></task-app></div>
  <div class="t"><button class="up" aria-label="Hidden icons">${icon('tup')}</button><button aria-label="OneDrive">${icon('cloud')}</button><button class="lang"><span>ENG<br>IN</span></button><button class="sys" aria-label="Network, volume, battery">${icon('wifi')}${icon('vol')}${icon('batt')}</button><button class="clock"><span>16:06<br>29-06-2023</span></button><button class="n">3</button></div>`);

define('desktop-screen', () => `<style>:host{display:flex;flex-direction:column;height:100vh}</style>
  <tab-strip></tab-strip><tool-bar></tool-bar><bookmark-bar></bookmark-bar><report-page></report-page><task-bar></task-bar>`);
</script>
</body>
</html>
